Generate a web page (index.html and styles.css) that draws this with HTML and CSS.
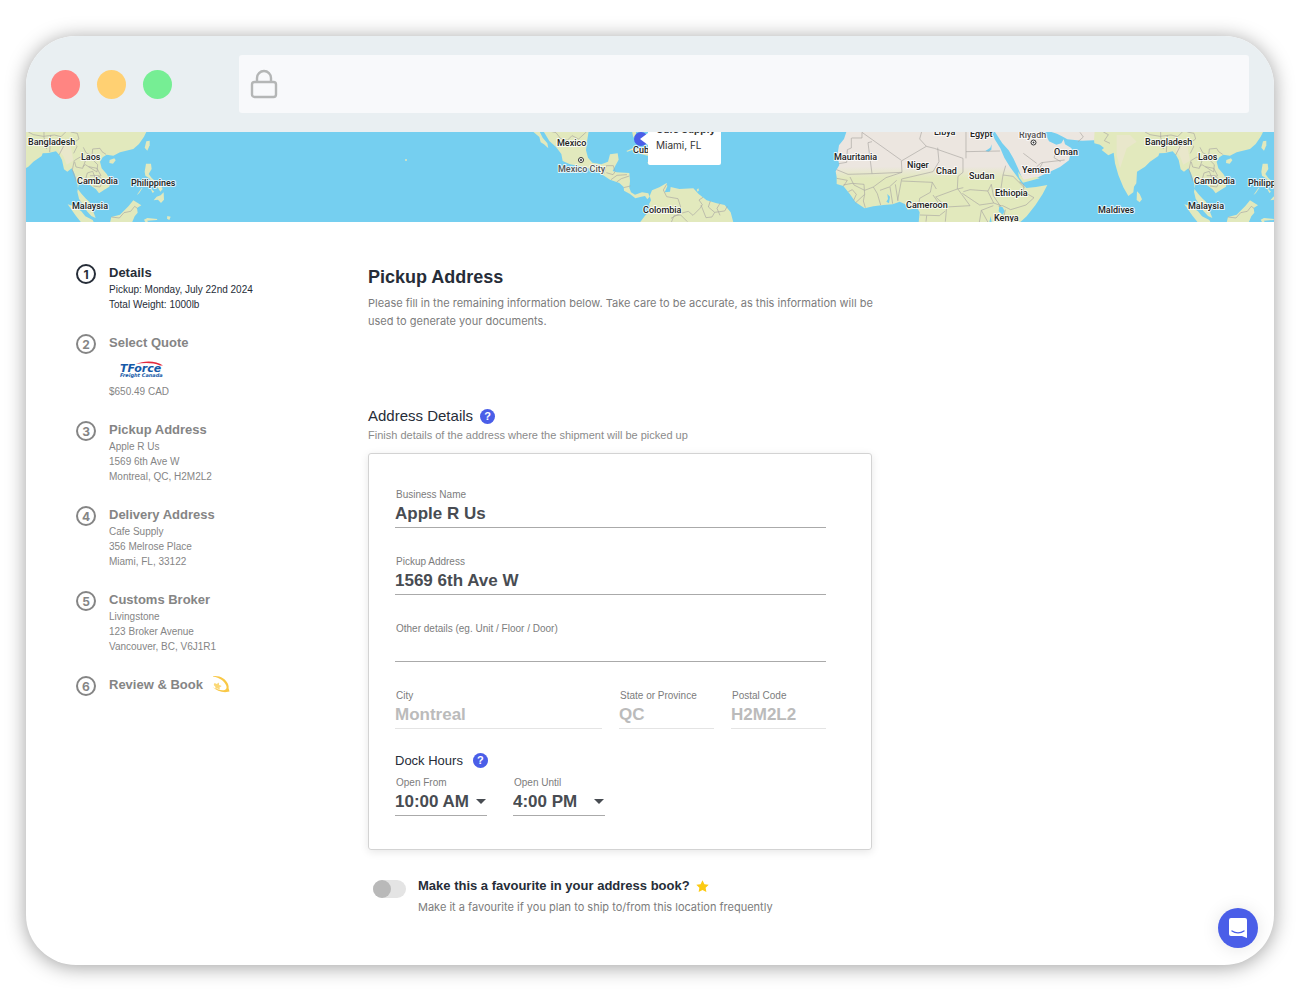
FILE: index.html
```html
<!DOCTYPE html>
<html lang="en">
<head>
<meta charset="utf-8">
<meta name="viewport" content="width=device-width, initial-scale=1">
<title>Pickup Address</title>
<link rel="stylesheet" href="styles.css">
</head>
<body>
<div class="window">
  <header class="toolbar">
    <div class="lights">
      <span class="light light-red"></span>
      <span class="light light-yellow"></span>
      <span class="light light-green"></span>
    </div>
    <div class="address-bar">
      <svg class="lock" viewBox="0 0 28 30" aria-hidden="true"><rect x="2" y="13" width="24" height="15" rx="2.500"/><path d="M7 13V9a7 7 0 0 1 14 0v4"/></svg>
    </div>
  </header>

  <svg class="map" viewBox="0 0 1248 90" preserveAspectRatio="xMidYMid slice" role="img" aria-label="Shipment map">
    <defs>
      <linearGradient id="sahara" gradientUnits="userSpaceOnUse" x1="0" y1="125" x2="0" y2="160">
        <stop offset="0" stop-color="#ece6e0"/><stop offset="1" stop-color="#e2e9bd"/>
      </linearGradient>
      <g id="asia">
        <g class="land">
          <path d="M130 334L133 370 150 374 162 384 155 390 175 406 191 398 195 430 205 465 220 502 235 528 250 517 252 500 259 490 261 455 285 440 300 425 325 408 328 400 345 399 368 394 378 405 386 420 392 448 402 455 415 445 423 460 432 485 434 508 445 522 458 536 468 545 476 565 487 594 474 588 461 574 447 552 437 536 432 515 437 488 447 485 455 492 470 495 488 508 497 520 512 510 528 500 532 482 520 462 505 445 500 425 508 412 520 404 540 407 560 397 600 387 617 372 632 350 640 334Z"/>
          <path d="M261 514L269 522 276 538 269 547 260 540Z"/>
          <path d="M529 420L543 415 547 421 539 431 528 429Z"/>
          <path d="M639 364L649 362 649 376 642 392 634 383Z"/>
          <path d="M638 431L653 431 655 447 646 462 655 474 665 483 657 487 648 475 636 467 634 455Z"/>
          <path d="M670 530L682 526 691 517 692 539 683 549 674 539 661 541Z"/>
          <path d="M664 491l9 9 8-6 7 13-7 8-8-13-8 2zM628 503l-10 16-8 7 15-22zM650 503l13 12-5 4z"/>
          <path d="M403 553L420 558 444 574 456 589 478 600 482 608 444 608 428 588Z"/>
          <path d="M530 608L534 591 560 584 574 570 586 558 600 541 624 556 611 564 613 578 604 589 596 608Z"/>
          <path d="M632 599l10-5 30 3-1 3-30 2 5 6h-9zM702 588l10 2-4 10-7-4z"/>
        </g>
        <path class="soft" d="M376 390l18-18 18 5 8 45-20 12-10-25zM200 345l40 0 20 20-30 20-20 60-10-40z"/>
        <g class="border">
          <path d="M160 336l15 8-12 18 17 8M285 336l15 8 30 5 33-4 20 5 14-14M332 336v16l5 15 3 20M352 346l-3 50M372 375l8-15 10 20-13 25M412 336l20 4 5 17-16 11 10 12-10 20M424 421l17-10 15 12-8 22-20-4-4-15M450 382l8 16 18 10 2-21 22-2 6 10 12 8M455 412l8 8 8-8 22 22-2 22-35-22-8 6M466 440l25 5 12 22-18 5-7-18-16 5-6 22M470 467h25l15 14-10 20-20-3"/>
          <path d="M534 591l24 3 14-16 20-4 12-15 8 6M423 421l-6 28 12 36"/>
        </g>
      </g>
    </defs>
    <rect width="1248" height="90" fill="#75cff0"/>
    <use href="#asia" transform="translate(-92.670 -112) scale(.33333)"/>
    <use href="#asia" transform="translate(1024 -112) scale(.33333)"/>

    <g transform="translate(504 -7) scale(.33333)">
      <g class="land">
        <path d="M7 18L28 18 38 38 52 55 55 70 42 58 32 52 28 36Z"/>
        <path d="M40 18L58 48 78 66 94 87 98 108 120 118 160 126 190 134 214 147 240 164 268 174 281 186 282 197 300 207 316 220 334 215 345 213 352 223 359 215 355 205 336 202 315 209 303 202 298 188 300 168 298 144 260 142 248 138 256 122 266 104 263 85 240 88 234 110 214 118 187 113 174 98 168 76 172 44 176 18Z"/>
        <path d="M359 213L366 196 388 187 410 174 412 184 404 202 420 200 422 186 448 192 490 190 505 206 530 226 560 235 584 240 602 262 610 292 330 292 345 272 362 255 357 238 363 226Z"/>
        <path d="M289 78l19-8 28 2 25 15-2 7-30-8-20-12-17 6zM306 18h12v10l-8 10z"/>
        <path d="M352 112l20-6 8 10-25 2z"/>
        <path d="M500 194l5-4 2 6-4 4z"/>
      </g>
      <g class="border">
        <path d="M58 18l20 5 14 18 20 5 14-14 20 10 24-22M222 146l7-24h21l4 15M229 143l20 6 7-10M243 164l18-13 30-2M260 171l14-10 24-8M281 188l20-5M410 178l-10 17 10 20 34 6 8 25-7 22-22 12M445 267l30-8 14 12 20-20 8-12-10-14 12-8M513 240l15 38 18-2 8-14-19-16 6-18M554 262l30-4 8-14M424 292l8-20 20-2 20 20M570 235l-9 15 9 21"/>
      </g>
    </g>
    <ellipse cx="380" cy="28" rx="1" ry="1" fill="#e2e9bd"/>

    <g transform="translate(794 -7) scale(.33333)">
      <path fill="url(#sahara)" d="M80 18L72 42 57 61 52 92 58 120 47 139 50 157 50 177 70 183 90 208 107 232 134 250 160 244 190 240 218 238 239 230 256 238 263 254 292 250 299 262 296 292 600 292 620 274 646 241 668 207 682 180 648 186 619 189 606 176 590 153 570 126 553 98 541 70 525 44 513 18Z"/>
      <g class="sand">
        <path d="M523 18L547 55 566 76 580 100 594 130 611 170 650 158 690 140 720 126 747 106 755 70 735 58 731 43 724 55 709 59 687 49 681 36 671 18Z"/>
        <path d="M684 18L711 26 730 36 742 43 786 47 822 46 824 18Z"/>
      </g>
      <path class="land" d="M594 140l18 24 36-9 11 5-50 13-12-16z"/>
      <g class="water">
        <path d="M496 78l15-10 4-10-1 16-8 6zM202 207l8 8-3 20-8-5 5-8zM538 244l10 3 6 12-6 10-12-10zM508 292l4-18 3 18z"/>
      </g>
      <g class="border">
        <path d="M95 39h31V22M94 39v30l-12 5-2 38-24 4M126 22l118 84M244 108l75-44M244 108l2 34-90 4M156 50l-12 3 12 93-72 2-34-14M246 142l-48 16-38 28-26 10-32-16-12-24M319 64l-20-22 6-22M319 64l24 6 86 30M353 68l4 42-18 30M438 20v80M438 80l102-2M429 100v42l-15 12-2 36M339 140l-94 22-12 64M245 168l92 4-6 30-32 18-4 30M337 172l12 20M347 216l65-24 18-4M160 186l12 20 10 34M180 196l28-10 22-20M210 186l8 50M226 178l8 50M50 160l32 6-12 18M70 180l26-5 36 3 2 30-28 26M85 200l12-6 12 14-8 18M134 208l-4 20 6 20M412 190l38 52M450 242l-70 4-33-30M430 200l20-6 54 4 10-20M427 205l37 25 15 10 42-6 22 8M521 234l-18-36M514 178l6 34 20 30M549 150l-6 40-18 22M549 150l30 4 34 34M549 150l8-28M598 170l14 10-2 20 32 18-24 22-46 14-24-12-12 2M556 254l-8 36M484 256l20 36M484 256l36-14M484 256l-6 36M380 246l-4 44M300 270l58 2 18-14M320 272l-2 18M341 250l12-20-14-20M650 125l14-12 70-8M668 112l-14 28M712 70l-10 28 20 12"/>
        <path d="M610 85l40 30M780 22l10 14-16 14"/>
      </g>
    </g>

    <g class="places">
      <text x="2" y="13">Bangladesh</text><text x="55" y="28">Laos</text><text x="51" y="52">Cambodia</text><text x="105" y="54">Philippines</text><text x="46" y="77">Malaysia</text>
      <text x="531" y="14">Mexico</text><text class="city" x="532" y="40">Mexico City</text><text x="607" y="21">Cuba</text><text x="617" y="81">Colombia</text>
      <text x="808" y="28">Mauritania</text><text x="881" y="36">Niger</text><text x="910" y="42">Chad</text><text x="943" y="47">Sudan</text><text x="908" y="3">Libya</text><text x="944" y="5">Egypt</text><text class="city" x="993" y="6">Riyadh</text><text x="996" y="41">Yemen</text><text x="1028" y="23">Oman</text><text x="969" y="64">Ethiopia</text><text x="880" y="76">Cameroon</text><text x="968" y="89">Kenya</text>
      <text x="1072" y="81">Maldives</text><text x="1119" y="13">Bangladesh</text><text x="1172" y="28">Laos</text><text x="1168" y="52">Cambodia</text><text x="1222" y="54">Philippines</text><text x="1162" y="77">Malaysia</text>
    </g>
    <g class="capital"><circle cx="555" cy="28" r="2.500"/><circle class="dot" cx="555" cy="28" r="1"/><circle cx="1007.500" cy="10.500" r="2.500"/><circle class="dot" cx="1007.500" cy="10.500" r="1"/></g>
    <circle cx="615" cy="7" r="7" fill="#4a5ee8"/>
    <path fill="#fff" d="M622 0h73v31a2 2 0 0 1-2 2h-69a2 2 0 0 1-2-2V13l-8-6 8-6z"/>
    <g class="callout"><text class="callout-name" x="630" y="1">Cafe Supply</text><text x="630" y="17">Miami, FL</text></g>
  </svg>

  <div class="content">
    <nav class="steps" aria-label="Booking steps">
      <ol>
        <li class="step current"><span class="num">1</span><div><h3>Details</h3><p>Pickup: Monday, July 22nd 2024<br>Total Weight: 1000lb</p></div></li>
        <li class="step"><span class="num">2</span><div><h3>Select Quote</h3>
          <svg class="carrier" viewBox="0 0 44 18" role="img" aria-label="TForce Freight Canada">
            <text class="carrier-name" x="0" y="11">TForce</text>
            <text class="carrier-sub" x="0" y="16">Freight Canada</text>
            <path fill="#e3293c" d="M16 3C24-.5 36-.5 43 4.500L40 4.500C33 1.500 24 1.500 16 3z"/>
          </svg>
          <p>$650.49 CAD</p></div></li>
        <li class="step"><span class="num">3</span><div><h3>Pickup Address</h3><p>Apple R Us<br>1569 6th Ave W<br>Montreal, QC, H2M2L2</p></div></li>
        <li class="step"><span class="num">4</span><div><h3>Delivery Address</h3><p>Cafe Supply<br>356 Melrose Place<br>Miami, FL, 33122</p></div></li>
        <li class="step"><span class="num">5</span><div><h3>Customs Broker</h3><p>Livingstone<br>123 Broker Avenue<br>Vancouver, BC, V6J1R1</p></div></li>
        <li class="step"><span class="num">6</span><div class="review"><h3>Review &amp; Book</h3>
          <svg class="dizzy" viewBox="0 0 18 18" aria-hidden="true"><path fill="#f9c846" d="M1 1C8 .2 13.500 3.500 16 9c.6 1.500.8 3 .6 4.200l.9 3.300-3 .6C9 17.500 4 15 .6 12.200c3.400 1.600 7 3 10 3 3.400 0 4.600-2 3.600-4.800C12.600 6 7.500 2.400 1 1.400z"/><path fill="#fbd876" d="M2.500 8l2.300 1 2-1.600.3 2.600 2.600.9-2.200 1.500.4 2.100-2.500-.9-2.200.6.3-2.300-1.800-1.800z"/></svg>
        </div></li>
      </ol>
    </nav>

    <main>
      <h1>Pickup Address</h1>
      <p class="intro">Please fill in the remaining information below. Take care to be accurate, as this information will be used to generate your documents.</p>

      <form>
        <div class="section-title"><h2>Address Details</h2><button type="button" class="help" aria-label="About address details">?</button></div>
        <p class="hint">Finish details of the address where the shipment will be picked up</p>
        <section class="card">
          <div class="field"><label for="business">Business Name</label><input id="business" value="Apple R Us"></div>
          <div class="field"><label for="street">Pickup Address</label><input id="street" value="1569 6th Ave W"></div>
          <div class="field"><label for="other">Other details (eg. Unit / Floor / Door)</label><input id="other"></div>
          <div class="row">
            <div class="field"><label for="city">City</label><input id="city" value="Montreal" disabled></div>
            <div class="field"><label for="state">State or Province</label><input id="state" value="QC" disabled></div>
            <div class="field"><label for="postal">Postal Code</label><input id="postal" value="H2M2L2" disabled></div>
          </div>
          <div class="dock">
            <div class="dock-title"><h3>Dock Hours</h3><button type="button" class="help" aria-label="About dock hours">?</button></div>
            <div class="times">
              <div class="field time"><label for="from">Open From</label><select id="from"><option>10:00 AM</option></select></div>
              <div class="field time"><label for="until">Open Until</label><select id="until"><option>4:00 PM</option></select></div>
            </div>
          </div>
        </section>

        <div class="favourite">
          <input type="checkbox" id="fav" class="switch">
          <div>
            <label for="fav">Make this a favourite in your address book?<svg class="star" viewBox="0 0 14 14" aria-hidden="true"><path d="M7 1.200l1.800 3.600 4 .6-2.900 2.800.7 4L7 10.300l-3.600 1.900.7-4L1.200 5.400l4-.6z"/></svg></label>
            <p>Make it a favourite if you plan to ship to/from this location frequently</p>
          </div>
        </div>
      </form>
    </main>
  </div>

  <button type="button" class="chat" aria-label="Open chat">
    <svg viewBox="0 0 20 22" aria-hidden="true"><path fill="#fff" d="M3 1h14a2 2 0 0 1 2 2v18l-5-2H3a2 2 0 0 1-2-2V3a2 2 0 0 1 2-2z"/><path fill="none" stroke="#4a5ee8" stroke-width="1.300" stroke-linecap="round" d="M4 14c3.500 2.600 8.500 2.600 12 0"/></svg>
  </button>
</div>
</body>
</html>
```
FILE: styles.css
```css
* { box-sizing: border-box; }

body {
  display: flex;
  min-height: 100vh;
  margin: 0;
  padding: 36px 26px 35px;
  background: #fff;
  color: #262d38;
  font-family: "Liberation Sans", Arial, sans-serif;
  font-size: 12px;
}

h1, h2, h3, p, ol { margin: 0; padding: 0; }
button { border: 0; padding: 0; cursor: pointer; font-family: inherit; }

.window {
  position: relative;
  flex: 1;
  min-width: 0;
  overflow: hidden;
  border-radius: 50px;
  background: #fff;
  box-shadow: 0 2px 20px rgba(0, 0, 0, .38);
}

/* Browser bar */
.toolbar {
  display: flex;
  align-items: center;
  gap: 67px;
  height: 96px;
  padding: 0 25px;
  background: #e9eff2;
}
.lights { display: flex; gap: 17px; }
.light { width: 29px; height: 29px; border-radius: 50%; }
.light-red { background: #ff8582; }
.light-yellow { background: #ffd072; }
.light-green { background: #76ee94; }
.address-bar {
  display: flex;
  flex: 1;
  align-items: center;
  height: 58px;
  padding-left: 11px;
  border-radius: 3px;
  background: #f8f9fb;
}
.lock { width: 28px; height: 30px; fill: none; stroke: #b4b6b6; stroke-width: 2.4; }

/* Map */
.map { display: block; width: 100%; height: 90px; }
.land { fill: #e2e9bd; }
.sand { fill: #ece6e0; }
.soft { fill: #e9e7cb; }
.water { fill: #75cff0; }
.border { fill: none; stroke: #aaa7a3; stroke-width: 2; }
.places {
  fill: #222;
  stroke: #fff;
  stroke-width: 2;
  stroke-linejoin: round;
  stroke-opacity: .8;
  paint-order: stroke;
  font: 500 9px Roboto, sans-serif;
}
.places .city { fill: #555; }
.capital { fill: #fff; stroke: #333; stroke-width: 1; }
.capital .dot { fill: #333; stroke: none; }
.callout { fill: #333; font: 10px Inter, sans-serif; }
.callout-name { font-weight: 700; }

/* Page */
.content {
  display: grid;
  grid-template-columns: 242px minmax(0, 504px);
  column-gap: 50px;
  padding: 41px 50px;
}
.steps ol { display: grid; gap: 21px; list-style: none; }
.step { display: flex; gap: 13px; color: #858585; }
.step h3 { font-size: 13px; line-height: 19px; }
.step p { font-size: 10px; line-height: 15px; }
.current { color: #262d38; }
.num {
  display: flex;
  align-items: center;
  justify-content: center;
  width: 20px;
  height: 20px;
  margin-top: 1px;
  border: 2px solid;
  border-radius: 50%;
  font: 700 12px Inter, sans-serif;
}
.carrier { display: block; width: 44px; height: 18px; margin: 9px 0 5px 11px; overflow: visible; }
.carrier text { fill: #1559a8; font-family: "DejaVu Sans", sans-serif; font-style: italic; font-weight: 700; }
.carrier-name { font-size: 11px; }
.carrier .carrier-sub { font-size: 5px; }
.review { display: flex; gap: 9px; }
.dizzy { width: 18px; height: 18px; }

h1 { font-size: 18px; line-height: 28px; }
.intro { margin: 3px -12px 0 0; color: #7c7c7c; font: 11px/18px Inter, sans-serif; }
.section-title { display: flex; align-items: center; gap: 7px; margin-top: 76px; }
h2 { font-size: 15px; font-weight: 400; line-height: 20px; }
.help {
  width: 15px;
  height: 15px;
  border-radius: 50%;
  background: #4a5ee8;
  color: #fff;
  font-size: 11px;
  font-weight: 700;
  line-height: 15px;
}
.hint { color: #8b8b8b; font-size: 11px; line-height: 18px; }

.card {
  display: grid;
  gap: 27px;
  margin-top: 9px;
  padding: 34px 45px 33px 26px;
  border: 1px solid #d3d3d3;
  border-radius: 3px;
  box-shadow: 0 2px 9px rgba(0, 0, 0, .1);
}
.field { display: flex; flex-direction: column; min-width: 0; }
.field label { padding-left: 1px; color: #7c7c7c; font-size: 10px; line-height: 14px; }
.field input, .field select {
  width: 100%;
  height: 26px;
  padding: 0 0 2px;
  border: 0;
  border-bottom: 1px solid #aaa;
  border-radius: 0;
  outline: 0;
  background: transparent;
  color: #484c52;
  font: 700 17px "Liberation Sans", Arial, sans-serif;
}
.field input:disabled { border-color: #e4e4e4; color: #bbb; }
.row { display: grid; grid-template-columns: 207fr 95fr 95fr; gap: 17px; }
.dock { margin-top: -6px; }
.dock-title { display: flex; align-items: center; gap: 10px; height: 20px; margin-bottom: 6px; }
.dock-title h3 { font-size: 13px; font-weight: 400; }
.times { display: flex; gap: 26px; }
.time { position: relative; width: 92px; }
.time select { appearance: none; }
.time::after {
  content: "";
  position: absolute;
  right: 1px;
  bottom: 12px;
  border: 5px solid transparent;
  border-top-color: #484c52;
  border-bottom: 0;
  pointer-events: none;
}

.favourite { display: flex; gap: 12px; margin: 26px 0 0 5px; }
.switch {
  display: flex;
  appearance: none;
  width: 33px;
  height: 18px;
  margin: 4px 0 0;
  border-radius: 9px;
  background: #e4e4e4;
}
.switch::before { content: ""; width: 18px; height: 18px; border-radius: 50%; background: #b9b9b9; }
.switch:checked { justify-content: flex-end; }
.favourite label { display: flex; align-items: center; gap: 5px; font-size: 13px; font-weight: 700; line-height: 20px; }
.favourite p { margin-top: 2px; color: #7c7c7c; font: 11px/18px Inter, sans-serif; }
.star { width: 15px; height: 15px; fill: #fcca12; }

.chat {
  position: absolute;
  right: 16px;
  bottom: 17px;
  display: flex;
  align-items: center;
  justify-content: center;
  width: 40px;
  height: 40px;
  border-radius: 50%;
  background: #4a5ee8;
  box-shadow: 0 1px 18px rgba(0, 0, 0, .1);
}
.chat svg { width: 20px; height: 22px; }
```
